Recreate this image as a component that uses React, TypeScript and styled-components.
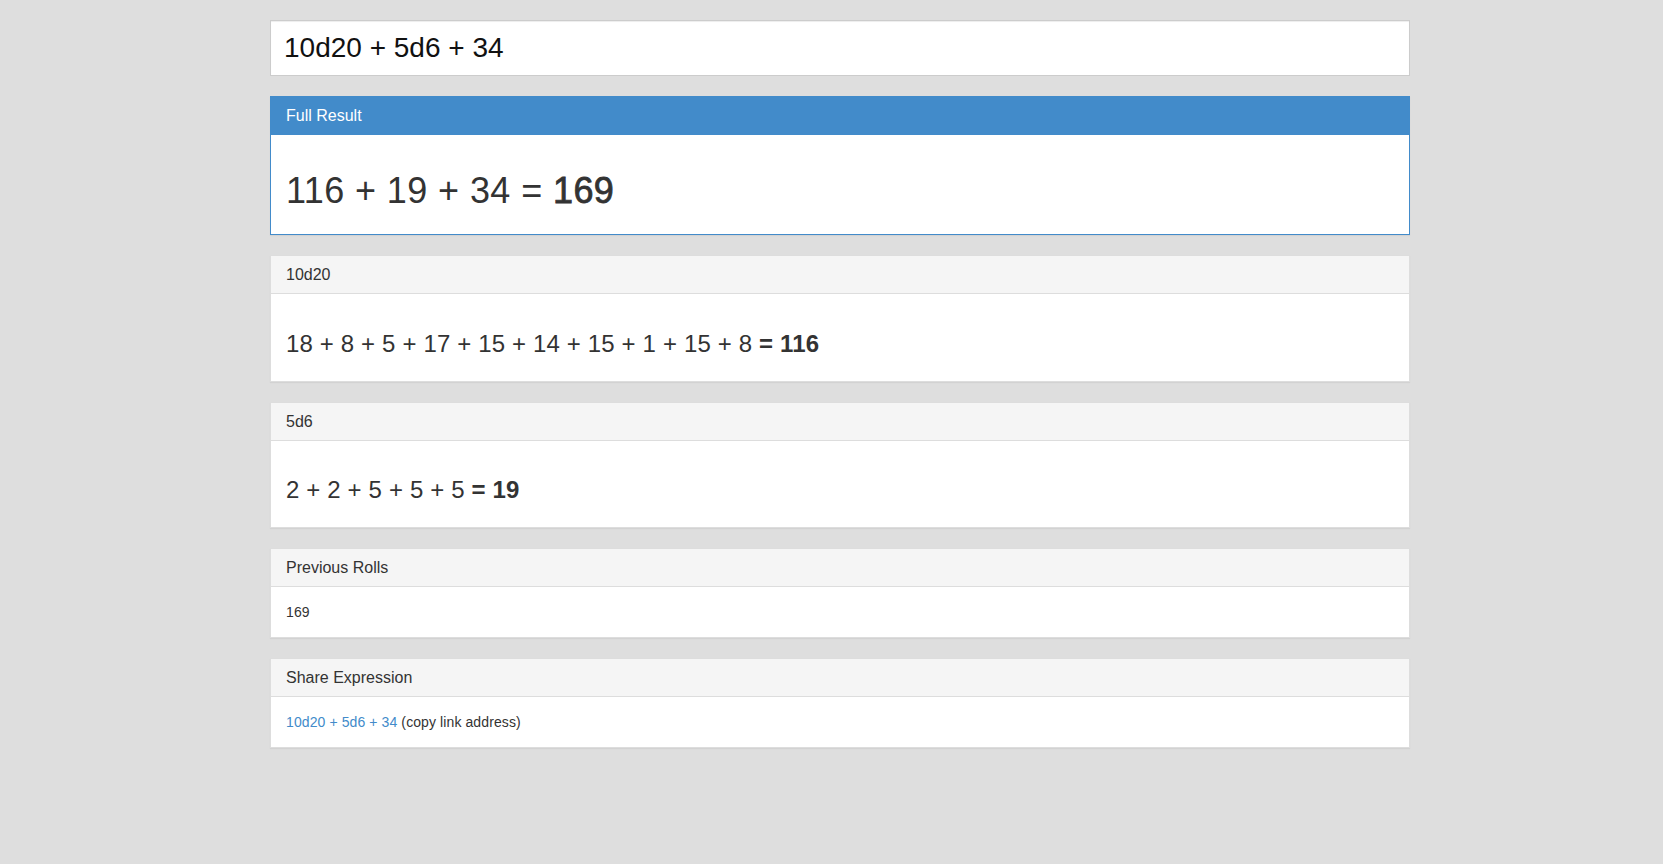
import React from "react"
import styled, { createGlobalStyle, css } from "styled-components"

/*==================== Data ====================*/

const expression = "10d20 + 5d6 + 34"

const groups = [
    { label: "10d20", rolls: [18, 8, 5, 17, 15, 14, 15, 1, 15, 8] },
    { label: "5d6", rolls: [2, 2, 5, 5, 5] },
]

const sum = (list: number[]) => list.reduce((a, b) => a + b, 0)

const totals = [...groups.map(g => sum(g.rolls)), 34]
const grandTotal = sum(totals)

/*==================== Component ====================*/

const App = () => (
    <>
        <GlobalStyle />
        <Page>
            <Container>
                <ExpressionInput type="text" defaultValue={expression} spellCheck={false} />

                <Panel $variant="primary">
                    <PanelHeading $variant="primary">
                        <PanelTitle>Full Result</PanelTitle>
                    </PanelHeading>
                    <PanelBody>
                        <Result $size="large">
                            {totals.join(" + ")} = <Strong $soft>{grandTotal}</Strong>
                        </Result>
                    </PanelBody>
                </Panel>

                {groups.map(group => (
                    <Panel key={group.label}>
                        <PanelHeading>
                            <PanelTitle>{group.label}</PanelTitle>
                        </PanelHeading>
                        <PanelBody>
                            <Result $size="medium">
                                {group.rolls.join(" + ")} <Strong>= {sum(group.rolls)}</Strong>
                            </Result>
                        </PanelBody>
                    </Panel>
                ))}

                <Panel>
                    <PanelHeading>
                        <PanelTitle>Previous Rolls</PanelTitle>
                    </PanelHeading>
                    <PanelBody>{grandTotal}</PanelBody>
                </Panel>

                <Panel>
                    <PanelHeading>
                        <PanelTitle>Share Expression</PanelTitle>
                    </PanelHeading>
                    <PanelBody>
                        <ShareLink href="#">{expression}</ShareLink> (copy link address)
                    </PanelBody>
                </Panel>
            </Container>
        </Page>
    </>
)

export default App

/*==================== Types ====================*/

type panelVariant = "default" | "primary"

interface panelStyleProps {
    $variant?: panelVariant
}

interface resultStyleProps {
    $size: "large" | "medium"
}

interface strongStyleProps {
    $soft?: boolean
}

/*==================== Styles ====================*/

const Colors = {
    Page: "#dedede",
    Text: "#333",
    Border: "#ddd",
    HeadingBg: "#f5f5f5",
    Primary: "#428bca",
}

const GlobalStyle = createGlobalStyle`
    * {
        box-sizing: border-box;
    }

    html, body {
        margin: 0;
        background: ${Colors.Page};
    }

    body {
        font-family: "Liberation Sans", Arial, Helvetica, sans-serif;
        font-size: 14px;
        line-height: 1.42857;
        color: ${Colors.Text};
        min-height: 864px;
    }
`

const Page = styled.div`
    display: flex;
    justify-content: center;
    padding: 20px 0 40px 17px;
`

const Container = styled.div`
    width: 1140px;
`

const ExpressionInput = styled.input`
    display: block;
    width: 100%;
    height: 56px;
    margin: 0 0 20px;
    padding: 0 13px;
    font-family: inherit;
    font-size: 28px;
    color: #111;
    background: #fff;
    border: 1px solid #ccc;
    border-radius: 0;
    box-shadow: inset 0 1px 1px rgba(0, 0, 0, 0.075);
    outline: none;
`

const Panel = styled.div<panelStyleProps>`
    margin-bottom: 20px;
    background: #fff;
    border: 1px solid ${({ $variant }) => ($variant === "primary" ? Colors.Primary : Colors.Border)};
    box-shadow: 0 1px 1px rgba(0, 0, 0, 0.05);
`

const PanelHeading = styled.div<panelStyleProps>`
    padding: 10px 15px 9.3px;
    border-bottom: 1px solid ${Colors.Border};
    background: ${Colors.HeadingBg};
    color: ${Colors.Text};

    ${({ $variant }) =>
        $variant === "primary" &&
        css`
            background: ${Colors.Primary};
            border-bottom-color: ${Colors.Primary};
            color: #fff;
        `}
`

const PanelTitle = styled.h3`
    margin: 0;
    font-size: 16px;
    font-weight: 400;
    line-height: 1.1;
    color: inherit;
`

const PanelBody = styled.div`
    padding: 16.5px 15px 13.5px;
    letter-spacing: 0.1px;
`

const Result = styled.h1<resultStyleProps>`
    margin: 20px 0 10px;
    font-weight: 400;
    line-height: 1.1;
    color: ${Colors.Text};
    font-size: ${({ $size }) => ($size === "large" ? "36px" : "24px")};
    letter-spacing: ${({ $size }) => ($size === "large" ? "0.4px" : "0.15px")};
`

const Strong = styled.strong<strongStyleProps>`
    font-weight: 700;

    ${({ $soft }) =>
        $soft &&
        css`
            font-weight: 400;
            -webkit-text-stroke: 0.8px currentColor;
        `}
`

const ShareLink = styled.a`
    color: ${Colors.Primary};
    text-decoration: none;
`
